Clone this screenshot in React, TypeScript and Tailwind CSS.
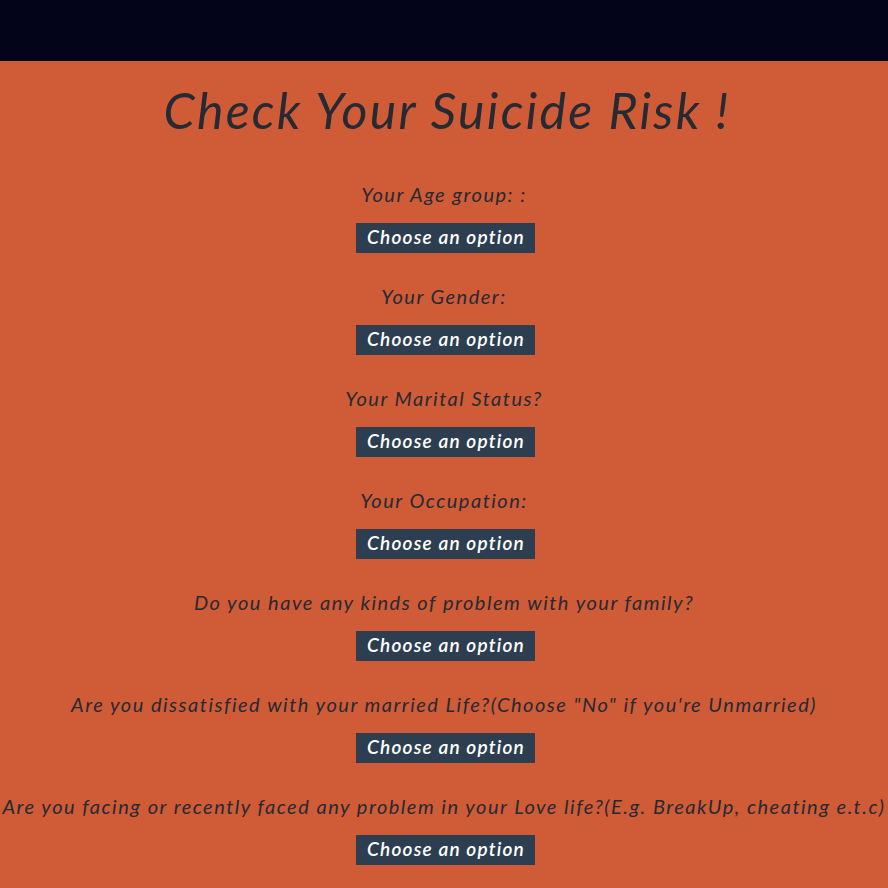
import React from "react";

const questions = [
  "Your Age group: :",
  "Your Gender:",
  "Your Marital Status?",
  "Your Occupation:",
  "Do you have any kinds of problem with your family?",
  "Are you dissatisfied with your married Life?(Choose \"No\" if you're Unmarried)",
  "Are you facing or recently faced any problem in your Love life?(E.g. BreakUp, cheating e.t.c)",
];

export default function App() {
  return (
    <div className="w-[888px] h-[888px] overflow-hidden bg-[#cf5b37]" style={{ fontFamily: "Lato, 'Open Sans', sans-serif" }}>
      <div className="h-[61px] bg-[#03031a]" />
      <h1 className="mt-[15px] h-[70px] leading-[68px] pl-[6px] text-center italic text-[50px] tracking-[2.3px] text-[#262a33] font-normal">
        Check Your Suicide Risk !
      </h1>
      <div className="mt-[35px] flex flex-col items-center">
        {questions.map((q) => (
          <div key={q} className="h-[102px] w-full flex flex-col items-center">
            <div className="h-[28px] leading-[26px] text-[20px] tracking-[1.5px] italic text-[#262a33] whitespace-nowrap text-center">{q}</div>
            <div className="mt-[14px] ml-[2px] w-[179px] h-[30px] bg-[#2c3e50] text-white italic font-semibold text-[19px] tracking-[1.2px] leading-[27px] pl-[2px] text-center">
              Choose an option
            </div>
          </div>
        ))}
      </div>
    </div>
  );
}
